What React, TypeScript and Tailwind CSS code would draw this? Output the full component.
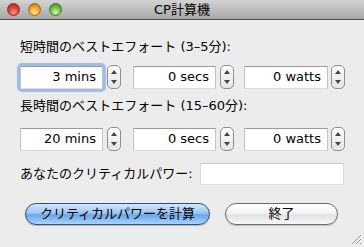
import React from "react";

const font = { fontFamily: '"DejaVu Sans", "Noto Sans CJK JP", sans-serif' };

function Stepper() {
  return (
    <div className="flex h-[24px] w-[14px] flex-col items-center justify-between rounded-[5px] border border-[#8e8e8e] bg-gradient-to-b from-[#ffffff] to-[#e4e4e4] py-[4px]">
      <svg width="6" height="4" viewBox="0 0 6 4">
        <path d="M3 0 L6 4 L0 4 Z" fill="#444" />
      </svg>
      <svg width="6" height="4" viewBox="0 0 6 4">
        <path d="M0 0 L6 0 L3 4 Z" fill="#444" />
      </svg>
    </div>
  );
}

function Field({
  value,
  focused,
  wide,
}: {
  value: string;
  focused?: boolean;
  wide?: boolean;
}) {
  return (
    <div
      className={`flex h-[23px] ${wide ? "w-[84px]" : "w-[83px]"} items-center justify-end border border-t-[#9a9a9a] border-x-[#c4c4c4] border-b-[#dcdcdc] bg-white pr-[6px] text-[13px] text-black ${
        focused ? "rounded-[2px] shadow-[0_0_1px_3px_#9dbde6]" : ""
      }`}
    >
      {value}
    </div>
  );
}

function Row({ mins, first }: { mins: string; first?: boolean }) {
  return (
    <div className="flex items-center pl-[20px]">
      <div className="flex items-center gap-[4px]">
        <Field value={mins} focused={first} />
        <Stepper />
      </div>
      <div className="ml-[12px] flex items-center gap-[4px]">
        <Field value="0 secs" />
        <Stepper />
      </div>
      <div className="ml-[10px] flex items-center gap-[3px]">
        <Field value="0 watts" wide />
        <Stepper />
      </div>
    </div>
  );
}

export default function App() {
  return (
    <div
      className="flex h-[247px] w-[364px] flex-col overflow-hidden bg-[#ececec] text-black"
      style={font}
    >
      {/* Title bar */}
      <div className="relative flex h-[20px] shrink-0 items-center border-b border-[#515151] bg-gradient-to-b from-[#d3d3d3] to-[#a7a7a7]">
        <div className="ml-[7px] flex gap-[8px]">
          <div className="h-[13px] w-[13px] rounded-full border border-[#9b2a26] bg-[radial-gradient(circle_at_50%_75%,#ff9a90,#e0443e_45%,#a8231d)]" />
          <div className="h-[13px] w-[13px] rounded-full border border-[#a46a12] bg-[radial-gradient(circle_at_50%_75%,#ffe79a,#f3a93a_45%,#b36c10)]" />
          <div className="h-[13px] w-[13px] rounded-full border border-[#3f7a22] bg-[radial-gradient(circle_at_50%_75%,#d3f7a6,#7cc24a_45%,#3f7f1e)]" />
        </div>
        <div className="absolute inset-0 flex items-center justify-center text-[13px] font-normal leading-none text-black">
          CP計算機
        </div>
      </div>

      {/* Body */}
      <div className="flex flex-col text-[13px]">
        <div className="mt-[19px] h-[16px] pl-[20px] leading-[16px]">
          短時間のベストエフォート (3–5分):
        </div>
        <div className="mt-[10px]">
          <Row mins="3 mins" first />
        </div>
        <div className="mt-[9px] h-[16px] pl-[20px] leading-[16px]">
          長時間のベストエフォート (15–60分):
        </div>
        <div className="mt-[13px]">
          <Row mins="20 mins" />
        </div>
        <div className="mt-[12px] flex items-center pl-[20px]">
          <span className="leading-[16px]">あなたのクリティカルパワー:</span>
          <div className="ml-auto mr-[20px] h-[22px] w-[144px] border border-t-[#c6c6c6] border-x-[#dcdcdc] border-b-[#e4e4e4] bg-white" />
        </div>
        <div className="mt-[18px] flex items-center pl-[25px]">
          <button className="flex h-[22px] w-[185px] items-center justify-center rounded-full border border-[#2e4f86] bg-[linear-gradient(to_bottom,#d5e6fb_0%,#9cc6f3_45%,#6aa6ea_55%,#a9d4fb_100%)] text-[13px] text-black shadow-[0_1px_1px_rgba(0,0,0,0.25)]">
            クリティカルパワーを計算
          </button>
          <button className="ml-[15px] flex h-[22px] w-[113px] items-center justify-center rounded-full border border-[#6e6e6e] bg-[linear-gradient(to_bottom,#ffffff_0%,#f4f4f4_45%,#e2e2e2_55%,#f8f8f8_100%)] text-[13px] text-black shadow-[0_1px_1px_rgba(0,0,0,0.2)]">
            終了
          </button>
        </div>
      </div>

      {/* Resize grip */}
      <div className="mt-auto flex justify-end pb-[2px] pr-[2px]">
        <svg width="11" height="11" viewBox="0 0 11 11">
          <path d="M1 10 L10 1 M5 10 L10 5 M9 10 L10 9" stroke="#9a9a9a" strokeWidth="1" />
        </svg>
      </div>
    </div>
  );
}
